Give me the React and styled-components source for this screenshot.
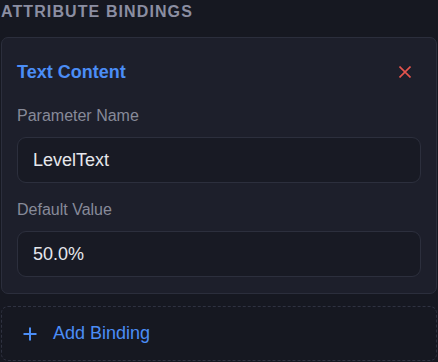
import React from "react"
import styled, { createGlobalStyle } from "styled-components"

const Global = createGlobalStyle`
  html, body {
    margin: 0;
    padding: 0;
    background: #161821;
    font-family: "Liberation Sans", Arial, sans-serif;
  }
`

const Panel = styled.div`
  width: 438px;
  height: 362px;
  overflow: hidden;
  padding: 0 1px;
  box-sizing: border-box;
`

const Heading = styled.h3`
  margin: 0;
  height: 37px;
  padding-top: 2px;
  box-sizing: border-box;
  font-size: 16px;
  line-height: 20px;
  font-weight: bold;
  letter-spacing: 1.1px;
  text-transform: uppercase;
  color: #8b8ea2;
`

const Card = styled.div`
  background: #1d1f2b;
  border: 1px solid #2b2e3c;
  border-radius: 7px;
  padding: 20px 15px 16px 15px;
`

const CardHeader = styled.div`
  display: flex;
  align-items: center;
  justify-content: space-between;
  height: 28px;
  margin-bottom: 21px;
`

const Title = styled.span`
  font-size: 18px;
  font-weight: bold;
  color: #4b8df6;
`

const RemoveButton = styled.button`
  background: none;
  border: 0;
  padding: 0;
  margin-right: 10px;
  display: flex;
  color: #e5544d;
  cursor: pointer;
`

const Field = styled.div`
  display: flex;
  flex-direction: column;
  & + & {
    margin-top: 18px;
  }
`

const Label = styled.label`
  font-size: 16px;
  line-height: 18px;
  color: #878a99;
  margin-bottom: 12px;
`

const Input = styled.input`
  height: 46px;
  box-sizing: border-box;
  background: #181a24;
  border: 1px solid #2c2f3d;
  border-radius: 9px;
  padding: 0 15px;
  font-family: inherit;
  font-size: 18px;
  color: #e6e7ec;
  outline: none;
`

const AddButton = styled.button`
  margin-top: 12px;
  width: 100%;
  height: 55px;
  display: flex;
  align-items: center;
  gap: 16px;
  padding: 0 0 0 21px;
  background: transparent;
  border: 1px dashed #2f3241;
  border-radius: 7px;
  font-family: inherit;
  font-size: 18px;
  color: #4b8df6;
  cursor: pointer;
`

const XIcon = () => (
  <svg width="12" height="12" viewBox="0 0 12 12" fill="none" stroke="currentColor" strokeWidth="1.6">
    <path d="M0.5 0.5l11 11M11.5 0.5l-11 11" />
  </svg>
)

const PlusIcon = () => (
  <svg width="14" height="14" viewBox="0 0 14 14" fill="none" stroke="currentColor" strokeWidth="2">
    <path d="M7 0.5v13M0.5 7h13" />
  </svg>
)

const App = () => {
  return (
    <>
      <Global />
      <Panel>
        <Heading>Attribute Bindings</Heading>
        <Card>
          <CardHeader>
            <Title>Text Content</Title>
            <RemoveButton aria-label="Remove">
              <XIcon />
            </RemoveButton>
          </CardHeader>
          <Field>
            <Label>Parameter Name</Label>
            <Input defaultValue="LevelText" />
          </Field>
          <Field>
            <Label>Default Value</Label>
            <Input defaultValue="50.0%" />
          </Field>
        </Card>
        <AddButton>
          <PlusIcon />
          Add Binding
        </AddButton>
      </Panel>
    </>
  )
}

export default App
